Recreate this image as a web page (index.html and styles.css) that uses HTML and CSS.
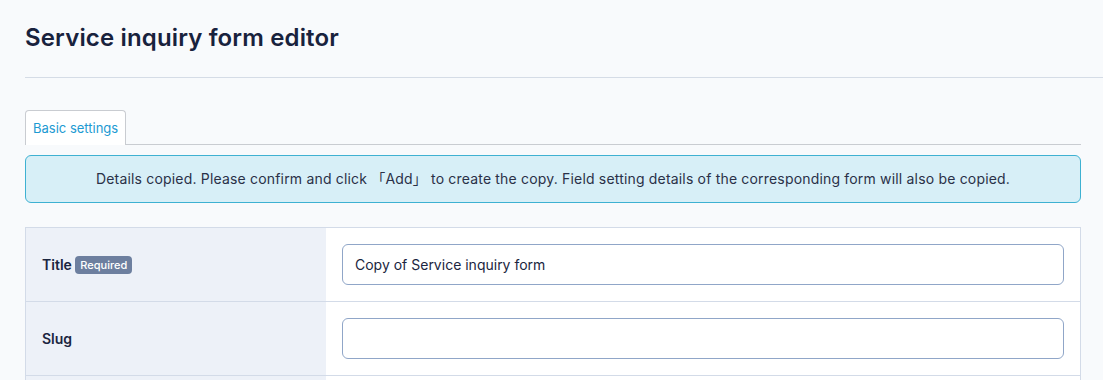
FILE: index.html
```html
<!DOCTYPE html>
<html lang="en">
<head>
    <meta charset="UTF-8">
    <meta name="viewport" content="width=device-width, initial-scale=1.0">
    <title>Service inquiry form editor</title>
    <link rel="stylesheet" href="styles.css">
</head>
<body>
    <div class="page">
        <h1 class="page_title">Service inquiry form editor</h1>

        <div class="content">
            <div class="tabs">
                <div class="tab active">Basic settings</div>
            </div>

            <div class="alert">
                Details copied. Please confirm and click 「Add」 to create the copy. Field setting details of the corresponding form will also be copied.
            </div>

            <table class="form_table">
                <tr>
                    <th>Title <span class="badge">Required</span></th>
                    <td><input type="text" value="Copy of Service inquiry form"></td>
                </tr>
                <tr>
                    <th>Slug</th>
                    <td><input type="text" value=""></td>
                </tr>
                <tr>
                    <th>&nbsp;</th>
                    <td>&nbsp;</td>
                </tr>
            </table>
        </div>
    </div>
</body>
</html>
```

FILE: styles.css
```css
body {
    margin: 0;
    background-color: #f8fafc;
    font-family: 'Inter', 'Noto Sans CJK JP', sans-serif;
    color: #1b2540;
    overflow: hidden;
}

.page {
    padding-left: 25px;
}

.page_title {
    margin: 0;
    padding: 22px 0 23px 0;
    font-size: 24px;
    font-weight: 600;
    line-height: 32px;
    letter-spacing: 0.15px;
    color: #18223d;
    border-bottom: 1px solid #d5dce6;
}

.content {
    width: 1056px;
    padding-top: 32px;
}

.tabs {
    display: flex;
    border-bottom: 1px solid #c9ccd1;
}

.tab {
    padding: 9px 7px 9px 7px;
    font-size: 13px;
    line-height: 16px;
    color: #1d9ad2;
    background-color: #fff;
    border: 1px solid #c9ccd1;
    border-bottom: none;
    border-radius: 4px 4px 0 0;
    margin-bottom: -1px;
}

.alert {
    margin-top: 10px;
    padding: 14px 10px;
    background-color: #d7eff7;
    border: 1px solid #3eb1d2;
    border-radius: 6px;
    text-align: center;
    font-size: 14px;
    line-height: 18px;
    letter-spacing: 0.18px;
    color: #2a3148;
}

.form_table {
    margin-top: 24px;
    width: 100%;
    border-collapse: collapse;
    background-color: #fff;
}

.form_table th,
.form_table td {
    border-top: 1px solid #d3dbe8;
    border-bottom: 1px solid #d3dbe8;
    height: 73px;
    padding: 0 16px;
}

.form_table th {
    width: 268px;
    background-color: #edf1f8;
    border-left: 1px solid #d3dbe8;
    text-align: left;
    font-size: 14px;
    font-weight: 600;
}

.form_table td {
    border-right: 1px solid #d3dbe8;
}

.badge {
    display: inline-block;
    padding: 2px 5px;
    background-color: #6d7f9f;
    color: #fff;
    font-size: 11px;
    font-weight: 500;
    line-height: 14px;
    border-radius: 4px;
    vertical-align: 1px;
}

input {
    box-sizing: border-box;
    width: 100%;
    height: 41px;
    padding: 0 12px;
    border: 1px solid #90a6c8;
    border-radius: 6px;
    font-family: 'Inter', sans-serif;
    font-size: 14px;
    color: #1b2540;
    background-color: #fff;
}
```
